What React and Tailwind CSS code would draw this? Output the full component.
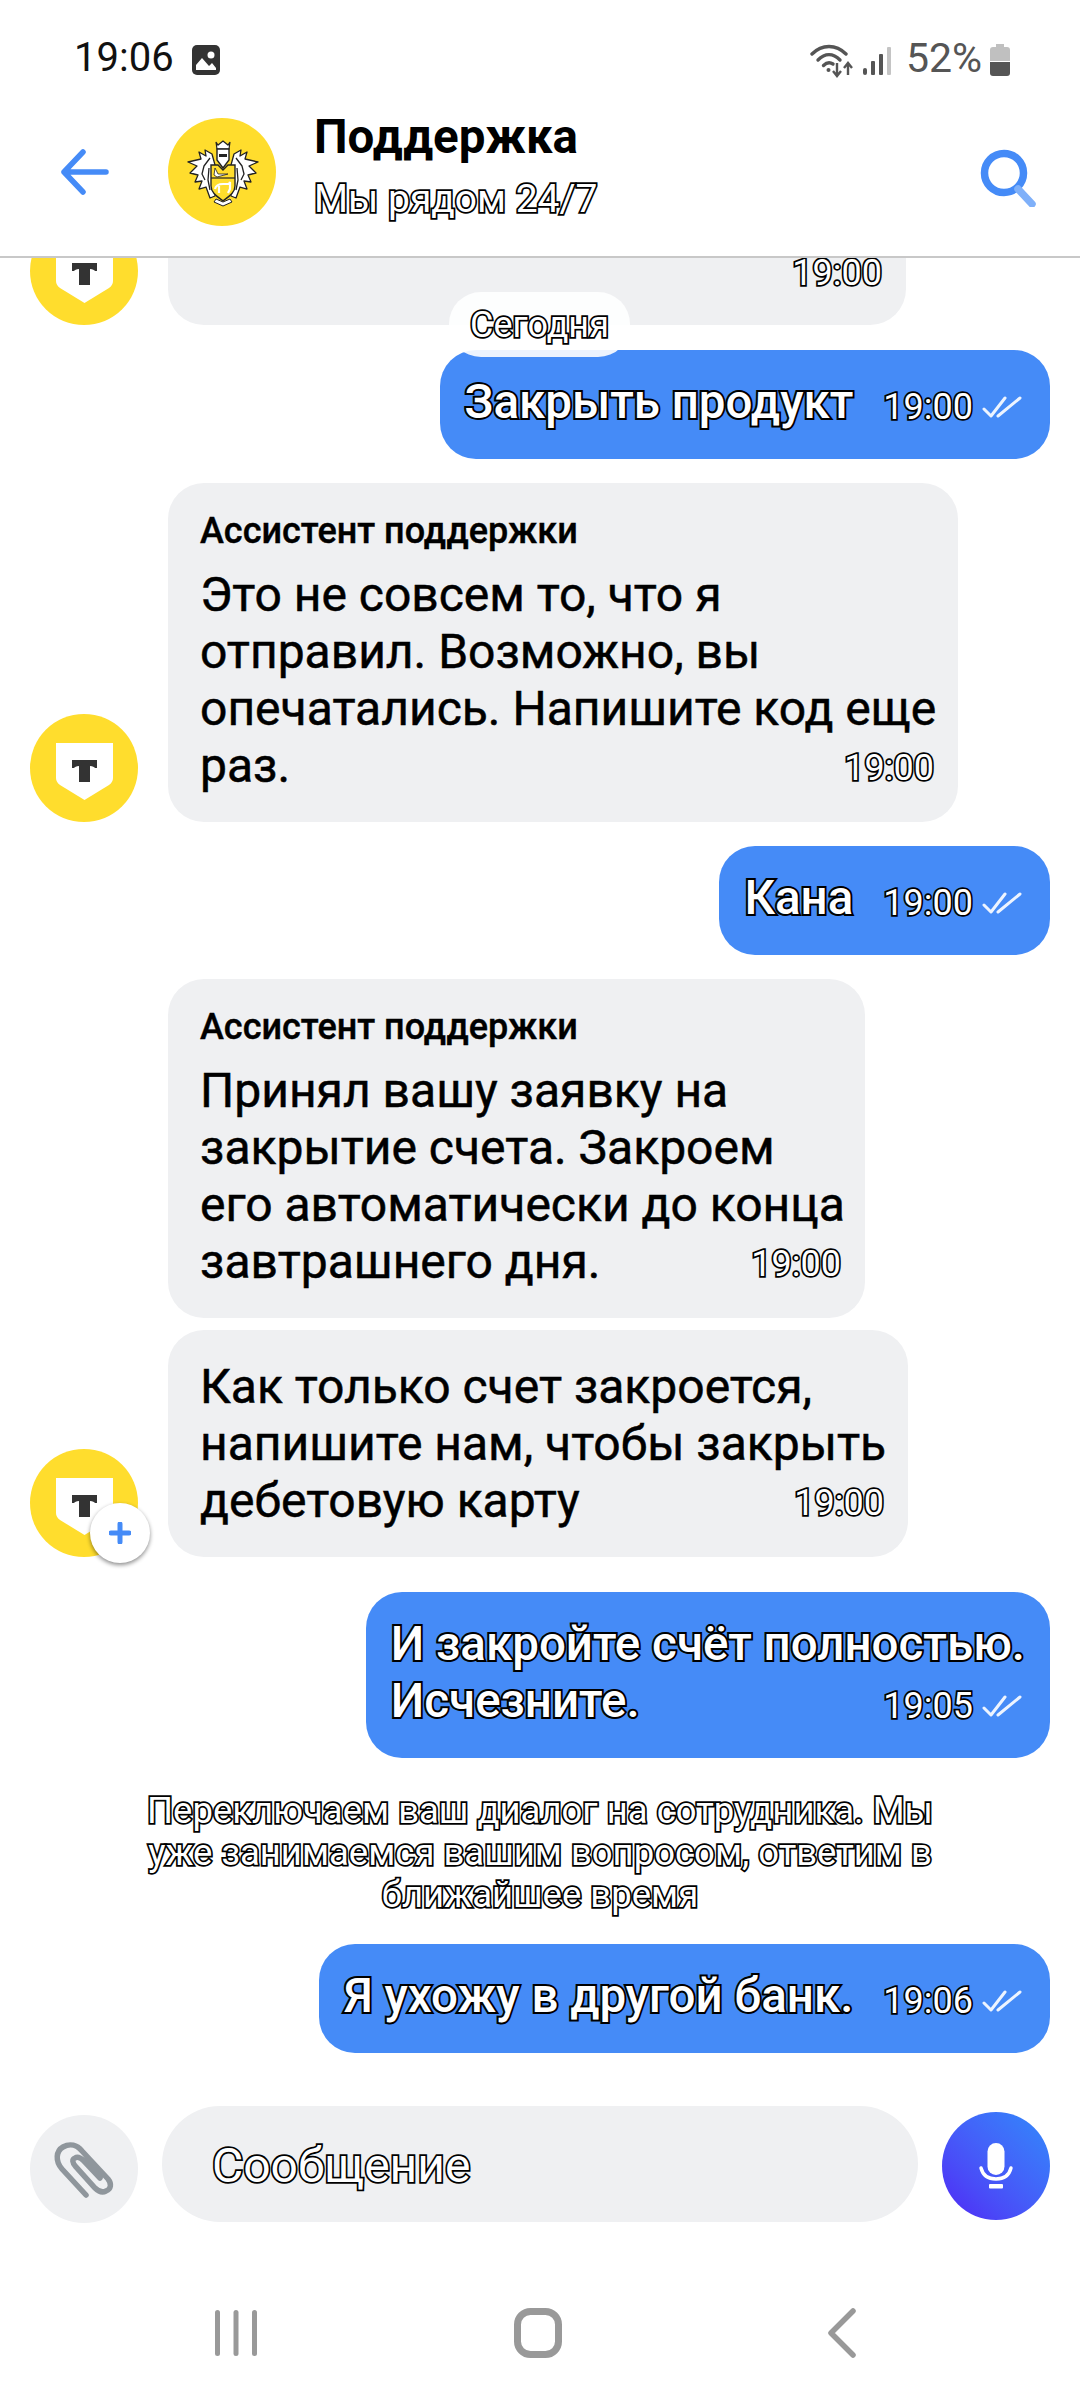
const outline = "text-white [-webkit-text-stroke:4px_#000] [paint-order:stroke_fill]";
const hollow = "text-white [-webkit-text-stroke:3.5px_#000] [paint-order:stroke_fill]";

function Avatar({ badge }) {
  return (
    <div className="relative w-[108px] h-[108px] shrink-0 rounded-full bg-[#ffdd2d]">
      <svg width="108" height="108" viewBox="0 0 108 108" className="absolute left-0 top-0">
        <path d="M26 29H83V64Q83 68 79 71L54.5 86L30 71Q26 68 26 64Z" fill="#fff" />
        <path d="M42 46H67V54H65C64 53 63 52 60 52V68H49V52C46 52 45 53 44 54H42Z" fill="#333" />
      </svg>
      {badge && (
        <div className="absolute left-[60px] top-[54px] w-[60px] h-[60px] rounded-full bg-white shadow-[0_2px_4px_rgba(0,0,0,0.45)] flex items-center justify-center">
          <svg width="22" height="22" viewBox="0 0 22 22">
            <path d="M11 2V20M2 11H20" stroke="#458bf7" strokeWidth="5" strokeLinecap="round" />
          </svg>
        </div>
      )}
    </div>
  );
}

function Leaf() {
  return (
    <g stroke="#222" strokeWidth="1.3" strokeLinejoin="round">
      <path d="M47 47L44 36L37 32L38 38L31 34L33 41L20 44L29 48L22 55L30 57L27 64L34 63L31 71L38 69L42 80L47 78Z" fill="#fff" />
      <path d="M42 40L36 48L34 56L37 62M41 50L40 62L42 72" fill="none" />
    </g>
  );
}

function Crest() {
  return (
    <svg width="108" height="108" viewBox="0 0 108 108">
      <circle cx="54" cy="54" r="54" fill="#ffdd2d" />
      <Leaf />
      <g transform="translate(110 0) scale(-1 1)"><Leaf /></g>
      <path d="M48 24L50 27L55 23L60 27L62 24L61 31H49Z" fill="#fff" stroke="#222" strokeWidth="1.2" />
      <path d="M49 31H61V42L55 50L49 42Z" fill="#fff" stroke="#222" strokeWidth="1.4" />
      <path d="M51 36H59V39H51Z" fill="#222" />
      <path d="M43 47H50L55 52L60 47H67V68C67 75 60 79 55 83C50 79 43 75 43 68Z" fill="#ffdd2d" stroke="#222" strokeWidth="1.4" />
      <path d="M43 60H67" stroke="#222" strokeWidth="1.2" />
      <path d="M47 50L50 56H60L49 59L46 57Z" fill="#fff" stroke="#222" strokeWidth="0.8" />
      <path d="M47 71C48 67 51 66 55 66H61L62 64L62 71L60 75M51 68L51 75" fill="none" stroke="#fff" strokeWidth="2.2" />
      <path d="M46 84L55 88L64 84L62 81L55 84L48 81Z" fill="#fff" stroke="#222" strokeWidth="1" />
    </svg>
  );
}

function Checks() {
  return (
    <svg width="40" height="24" viewBox="0 0 40 24" className="shrink-0">
      <path d="M2 14L9 21L23 3M16 21L38 3" fill="none" stroke="#fff" strokeOpacity="0.9" strokeWidth="3" strokeLinecap="round" strokeLinejoin="round" />
    </svg>
  );
}

function Time({ children, className = "" }) {
  return <span className={`text-[36px] leading-[40px] ${className}`}>{children}</span>;
}

function Outgoing({ lines, time, className = "" }) {
  return (
    <div className={`self-end w-fit rounded-[36px] bg-[#458bf7] pl-[25px] pr-[25px] py-[26px] text-[47.5px] leading-[57px] font-medium whitespace-nowrap ${className}`}>
      {lines.slice(0, -1).map((l) => (
        <div key={l} className={`-translate-y-[2px] ${outline}`}>{l}</div>
      ))}
      <div className="flex items-center justify-between gap-[30px]">
        <span className={`-translate-y-[2px] ${outline}`}>{lines[lines.length - 1]}</span>
        <span className="flex items-center gap-[9px] pt-[5px] mr-[3px] font-normal">
          <Time className={hollow}>{time}</Time>
          <Checks />
        </span>
      </div>
    </div>
  );
}

function Incoming({ width, sender, lines, avatar, badge, className = "" }) {
  return (
    <div className={`flex items-end gap-[30px] ${className}`}>
      {avatar ? <Avatar badge={badge} /> : <div className="w-[108px] shrink-0" />}
      <div className={`rounded-[36px] bg-[#eff0f2] pl-[32px] pr-[24px] pt-[28px] pb-[28px] text-[48px] leading-[57px] text-black whitespace-nowrap ${width}`}>
        {sender && <div className="text-[36px] leading-[40px] font-medium mb-[15px] [-webkit-text-stroke:0.4px_#000]">{sender}</div>}
        {lines.slice(0, -1).map((l) => (
          <div key={l} className="[-webkit-text-stroke:0.5px_#000]">{l}</div>
        ))}
        <div className="flex items-center justify-between">
          <span className="[-webkit-text-stroke:0.5px_#000]">{lines[lines.length - 1]}</span>
          <Time className={`pt-[4px] ${hollow}`}>19:00</Time>
        </div>
      </div>
    </div>
  );
}

export default function App() {
  return (
    <div className="relative w-[1080px] h-[2400px] bg-white flex flex-col overflow-hidden font-['Roboto',sans-serif]">
      {/* status bar */}
      <div className="h-[106px] shrink-0 flex items-start pt-[35px] pl-[74px]">
        <span className="w-[101px] text-[40px] leading-[46px] text-[#111] whitespace-nowrap">19:06</span>
        <svg width="28" height="30" viewBox="0 0 28 30" className="ml-[17px] mt-[10px]">
          <rect width="28" height="30" rx="5" fill="#333" />
          <circle cx="19" cy="10" r="3.5" fill="#fff" />
          <path d="M4 25V20L10 13L17 21L20 18L24 23V25Z" fill="#fff" />
        </svg>
        <svg width="44" height="34" viewBox="0 0 44 34" className="ml-[590px] mt-[9px]" fill="none" stroke="#555">
          <path d="M2 10C12 0 26 0 36 10" strokeWidth="3.4" strokeLinecap="round" />
          <path d="M8 16C15 9 23 9 30 16" strokeWidth="3.4" strokeLinecap="round" />
          <path d="M13.5 21.5C17 18 20 18 23 20" strokeWidth="3.4" strokeLinecap="round" />
          <circle cx="18.5" cy="26" r="2" fill="#555" stroke="none" />
          <path d="M27 19V31M23 27L27 32L31 27" strokeWidth="2.4" />
          <path d="M38 31V20M34 24L38 19L42 24" strokeWidth="2.4" />
        </svg>
        <svg width="28" height="30" viewBox="0 0 28 30" className="ml-[9px] mt-[11px]">
          <rect x="0" y="22" width="4" height="7" rx="2" fill="#555" />
          <rect x="8" y="15" width="4" height="14" rx="1" fill="#555" />
          <rect x="16" y="8" width="4" height="21" rx="1" fill="#555" />
          <rect x="24" y="1" width="4" height="28" rx="1" fill="#c4c4c4" />
        </svg>
        <span className="ml-[15px] text-[41px] leading-[46px] text-[#555]">52%</span>
        <svg width="20" height="32" viewBox="0 0 20 32" className="ml-[8px] mt-[9px]">
          <path d="M6 0H14V3H17C19 3 20 4 20 6V17H0V6C0 4 1 3 3 3H6Z" fill="#c0c0c0" />
          <path d="M0 18H20V29C20 31 19 32 17 32H3C1 32 0 31 0 29Z" fill="#555" />
        </svg>
      </div>

      {/* header */}
      <div className="h-[152px] shrink-0 border-b-2 border-[#c8c8c8] flex items-start pt-[12px]">
        <svg width="48" height="46" viewBox="0 0 48 46" fill="none" stroke="#458bf7" strokeWidth="5.5" strokeLinecap="round" strokeLinejoin="round" className="ml-[61px] mt-[31px]">
          <path d="M22 3L3 23L22 43M3 23H45" />
        </svg>
        <div className="ml-[59px] shrink-0"><Crest /></div>
        <div className="ml-[38px] flex flex-col -mt-[8px]">
          <div className="text-[47.5px] leading-[54px] font-bold text-black">Поддержка</div>
          <div className={`text-[39px] leading-[44px] mt-[13px] ${hollow}`}>Мы рядом 24/7</div>
        </div>
        <svg width="56" height="58" viewBox="0 0 56 58" fill="none" className="ml-auto mr-[44px] mt-[31px]">
          <circle cx="24" cy="24" r="19.5" stroke="#458bf7" strokeWidth="7.5" />
          <path d="M38 40L52 55" stroke="#7fb0f9" strokeWidth="7.5" strokeLinecap="round" />
        </svg>
      </div>

      {/* chat */}
      <div className="relative flex-1 min-h-0 flex flex-col px-[30px] overflow-hidden">
        <div className="h-[67px] shrink-0 flex items-end gap-[30px] overflow-hidden">
          <Avatar />
          <div className="w-[738px] h-[120px] shrink-0 rounded-[36px] bg-[#eff0f2] flex items-end justify-end pr-[24px] pb-[32px]">
            <Time className={hollow}>19:00</Time>
          </div>
        </div>

        <Outgoing className="mt-[25px]" lines={["Закрыть продукт"]} time="19:00" />
        <Incoming className="mt-[24px]" width="w-[790px]" avatar sender="Ассистент поддержки"
          lines={["Это не совсем то, что я", "отправил. Возможно, вы", "опечатались. Напишите код еще", "раз."]} />
        <Outgoing className="mt-[24px]" lines={["Кана"]} time="19:00" />
        <Incoming className="mt-[24px]" width="w-[697px]" sender="Ассистент поддержки"
          lines={["Принял вашу заявку на", "закрытие счета. Закроем", "его автоматически до конца", "завтрашнего дня."]} />
        <Incoming className="mt-[12px]" width="w-[740px]" avatar badge
          lines={["Как только счет закроется,", "напишите нам, чтобы закрыть", "дебетовую карту"]} />
        <Outgoing className="mt-[35px]" lines={["И закройте счёт полностью.", "Исчезните."]} time="19:05" />
        <div className={`mt-[32px] text-center text-[36.5px] leading-[42px] whitespace-nowrap ${hollow}`}>
          <div>Переключаем ваш диалог на сотрудника. Мы</div>
          <div>уже занимаемся вашим вопросом, ответим в</div>
          <div>ближайшее время</div>
        </div>
        <Outgoing className="mt-[28px]" lines={["Я ухожу в другой банк."]} time="19:06" />

        <div className={`absolute left-[449px] top-[34px] w-[181px] h-[65px] rounded-[32px] bg-white/90 flex items-center justify-center text-[36px] leading-[40px] ${hollow}`}>
          Сегодня
        </div>
      </div>

      {/* composer */}
      <div className="h-[117px] shrink-0 flex items-start pl-[30px]">
        <div className="w-[108px] h-[108px] mt-[9px] shrink-0 rounded-full bg-[#eff0f2]">
          <svg width="108" height="108" viewBox="0 0 108 108" fill="none" stroke="#8f969c" strokeWidth="5.5" strokeLinecap="round">
            <path d="M56 80L32 54C25 46 26 36 33 32C40 28 47 30 52 36L78 64C82 69 81 74 76 76C72 78 68 76 65 73L46 52C42 48 42 44 45 43C48 41 51 43 54 46L70 63" />
          </svg>
        </div>
        <div className="ml-[24px] w-[756px] h-[116px] shrink-0 rounded-[58px] bg-[#eff0f2] flex items-center pl-[50px] pt-[2px]">
          <span className={`text-[48px] leading-[57px] ${hollow}`}>Сообщение</span>
        </div>
        <div className="ml-[24px] mt-[6px] w-[108px] h-[108px] shrink-0 rounded-full bg-gradient-to-tr from-[#4f1ff5] to-[#2f88fb]">
          <svg width="108" height="108" viewBox="0 0 108 108" fill="none">
            <rect x="45.5" y="31" width="17" height="32" rx="8.5" fill="#fff" />
            <path d="M39 56C41 64 47 67 54 67C61 67 67 64 69 56" stroke="#fff" strokeWidth="3.4" strokeLinecap="round" />
            <rect x="47" y="72" width="14" height="4.5" rx="1" fill="#fff" />
          </svg>
        </div>
      </div>

      {/* nav */}
      <div className="h-[177px] shrink-0 flex items-start pt-[85px]">
        <svg width="42" height="50" viewBox="0 0 42 50" className="ml-[215px]" fill="#999">
          <rect x="0" y="2" width="5" height="46" rx="2.5" />
          <rect x="18.5" y="2" width="5" height="46" rx="2.5" />
          <rect x="37" y="2" width="5" height="46" rx="2.5" />
        </svg>
        <svg width="48" height="50" viewBox="0 0 48 50" fill="none" stroke="#999" strokeWidth="7" className="ml-[257px]">
          <rect x="3.5" y="3.5" width="41" height="43" rx="13" />
        </svg>
        <svg width="28" height="50" viewBox="0 0 28 50" fill="none" stroke="#999" strokeWidth="5.5" strokeLinecap="round" strokeLinejoin="round" className="ml-[266px]">
          <path d="M25 3L3 25L25 47" />
        </svg>
      </div>
    </div>
  );
}
